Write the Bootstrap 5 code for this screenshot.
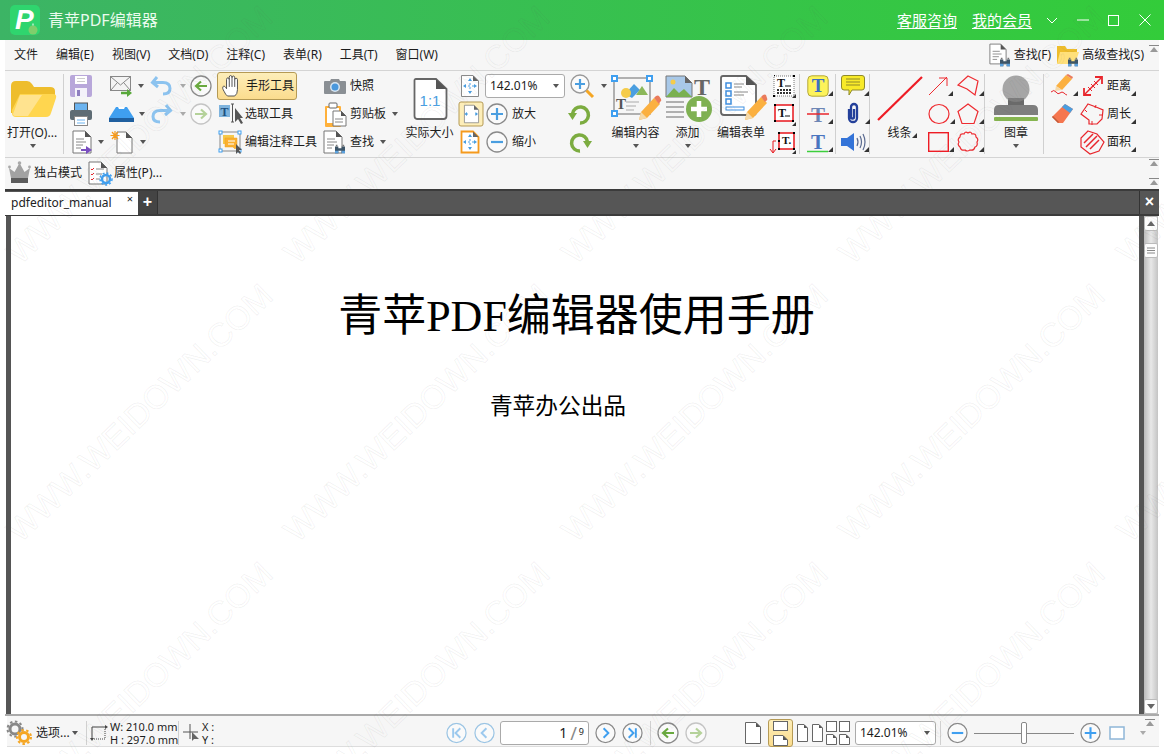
<!DOCTYPE html>
<html lang="zh-CN">
<head>
<meta charset="UTF-8">
<meta name="viewport" content="width=device-width, initial-scale=1.0">
<title>青苹PDF编辑器</title>
<link href="https://cdn.jsdelivr.net/npm/bootstrap@5.3.3/dist/css/bootstrap.min.css" rel="stylesheet">
<style>
html, body { height: 754px; overflow: hidden; }
body { position: relative; background: #fff; color: #1c1c1c; font: 12px/16px "Noto Sans", "Noto Sans CJK SC", sans-serif; }
svg { display: block; flex: none; overflow: visible; }
.titlebar { height: 40px; background: linear-gradient(90deg, #3cb465, #33cc3a); color: #fff; padding-left: 10px; }
.app-name { margin-left: 8px; font-size: 16px; color: #eafbee; }
.top-link { color: #fff; font-size: 15px; text-decoration: underline; text-underline-offset: 2px; }
.win-btn { width: 31px; height: 40px; }
.win { margin-left: 5px; width: 1154px; }
.menubar { height: 31px; background: #f6f6f6; border-bottom: 1px solid #d4d4d4; padding-left: 9px; }
.menubar > span.mi { margin-right: 18px; }
.fold { width: 10px; height: 8px; flex: none; border-top: 1px solid #888; position: relative; }
.fold::after { content: ""; position: absolute; left: 1px; top: 1px; border: 4px solid transparent; border-top: 0; border-bottom: 5px solid #999; }
.ribbon { height: 87px; background: #f6f6f6; border-bottom: 1px solid #d4d4d4; padding-top: 1px; display: grid;
  grid-template-columns: 58px 3px 41px 41px 40px 27px 107px 81px 55px 25px 83px 42px 55px 52px 55px 29px 5px 31px 4px 30px 4px 53px 29px 29px 5px 54px 5px 32px 70px 1fr;
  grid-template-rows: 28px 28px 28px; }
.cell { display: flex; align-items: center; white-space: nowrap; min-width: 0; }
.tall { grid-row: span 3; }
.big { display: flex; flex-direction: column; align-items: center; white-space: nowrap; }
.big-ico { height: 53px; display: flex; align-items: center; justify-content: center; }
.big .car { margin-top: 3px; }
.vsep { border-left: 1px solid #d0d0d0; margin: 2px 0; }
.car { display: inline-block; flex: none; border: 3.5px solid transparent; border-bottom: 0; border-top: 4px solid #555; }
.tri { flex: none; width: 0; height: 0; border-left: 5px solid transparent; border-bottom: 5px solid #333; align-self: flex-end; margin-bottom: 4px; }
.hand-on { height: 28px; width: 80px; margin-left: 2px; border: 1px solid #b59a55; border-radius: 3px; background: linear-gradient(#fdeeb9, #fbdc8e); padding-left: 4px; }
.combo { height: 24px; background: #fff; border: 1px solid #aaa; border-radius: 3px; padding: 0 5px 0 4px; display: flex; align-items: center; justify-content: space-between; }
.page-on { width: 25px; height: 28px; border: 1px solid #b59a55; border-radius: 3px; background: linear-gradient(#fdeeb9, #fbdc8e); }
.row3 { height: 31px; background: #f6f6f6; padding: 0 0 2px 3px; }
.tabs { height: 27px; background: #565656; border-top: 2px solid #3b3b3b; border-bottom: 2px solid #3b3b3b; color: #fff; }
.doc-tab { width: 133px; height: 23px; background: #fff; color: #222; padding: 3px 5px 0 6px; margin-top: 1px; }
.tab-x { font-size: 11px; line-height: 10px; margin-top: -1px; }
.tab-plus { width: 20px; font: 700 16px/22px "Liberation Sans", sans-serif; text-align: center; background: #444; border-right: 1px solid #333; }
.tab-close { width: 20px; font: 700 16px/22px "Liberation Sans", sans-serif; text-align: center; border-left: 1px solid #333; margin-left: auto; }
.doc { height: 500px; border-bottom: 2px solid #aaa; }
.strip-l { width: 5px; margin-left: 1px; background: #555; }
.strip-r { width: 5px; background: #555; }
.sheet { background: #fff; padding-top: 73px; }
.doc-title { font: 44px/56px "Liberation Serif", "Noto Sans CJK SC", serif; color: #000; padding-left: 3px; }
.doc-sub { font-size: 22.7px; line-height: 32px; color: #000; margin-top: 45px; margin-right: 34px; }
.vscroll { width: 14px; margin-right: 1px; background: linear-gradient(90deg, #bbb, #e8e8e8 50%, #c4c4c4); }
.sb-btn { height: 15px; background: #fdfdfd; border: 1px solid #bbb; border-radius: 2px; }
.sb-thumb { height: 15px; margin-top: 12px; background: #fdfdfd; border: 1px solid #bbb; border-radius: 2px; }
.statusbar { margin-left: 2px; height: 31px; padding-top: 3px; background: #f6f6f6; border-bottom: 1px solid #ddd; display: grid;
  grid-template-columns: 27px 38px 14px 4px 20px 68px 5px 19px 244px 28px 26px 95px 27px 28px 7px 28px 60px 23px 29px 29px 29px 85px 7px 27px 106px 29px 31px 12px 1fr; }
.wh { font-size: 11px; line-height: 13px; white-space: nowrap; }
.page-box { width: 89px; height: 24px; background: #fff; border: 1px solid #aaa; border-radius: 3px; justify-content: flex-end; padding-right: 4px; font-size: 14px; }
.page-box small { font-size: 9px; align-self: flex-start; margin-top: 2px; }
.page-slash { font-size: 18px; color: #888; margin: 0 2px 0 3px; }
.track { height: 1px; width: 47px; background: #888; }
.knob { width: 6px; height: 22px; border: 1px solid #888; border-radius: 2px; background: #fff; }
.wm-clip { position: absolute; inset: 0; overflow: hidden; pointer-events: none; z-index: 5; }
.wm-layer { margin: -4px 0 0 1px; width: 1388px; display: grid; grid-template-columns: repeat(5, 277.5px); grid-auto-rows: 278px; }
.wm-layer span { align-self: center; justify-self: center; font: 33px/40px "Liberation Sans", sans-serif; white-space: nowrap; color: transparent; -webkit-text-stroke: 1px rgba(90, 90, 90, .07); transform: rotate(-44deg); }
</style>
</head>
<body>
<svg width="0" height="0" class="position-absolute">
  <defs>
    <symbol id="pg" viewBox="0 0 20 24"><path d="M1 1H13L19 7V23H1z" fill="#fff" stroke="#777"/><path d="M13 1V7H19z" fill="#555"/></symbol>
    <symbol id="lines" viewBox="0 0 20 24"><path d="M4 9H12M4 12H14M4 15H11M4 18H9" stroke="#888"/></symbol>
    <symbol id="binoc" viewBox="0 0 14 12"><path d="M1 3h4v8H1zM9 3h4v8H9zM5 5h4v3H5z" fill="#3d5568"/><path d="M2 1h2v2H2zM10 1h2v2h-2z" fill="#777"/><path d="M1 8h4v3H1zM9 8h4v3H9z" fill="#5aa0dc"/></symbol>
    <symbol id="circ" viewBox="0 0 22 22"><circle cx="11" cy="11" r="10" fill="#fafafa" stroke="#8a8a8a" stroke-width="1.300"/></symbol>
    <symbol id="circ-b" viewBox="0 0 22 22"><circle cx="11" cy="11" r="10" fill="#fafafa" stroke="#9cc5e4" stroke-width="1.300"/></symbol>
    <symbol id="pgfit" viewBox="0 0 20 24"><path d="M1.500 1.500H13L18.500 7V22.500H1.500z" fill="#fff" stroke="#8a8a8a"/><path d="M13 1.500V7H18.500z" fill="#666"/></symbol>
  </defs>
</svg>

<div class="titlebar d-flex align-items-center">
  <svg width="30" height="30" viewBox="0 0 30 30"><rect width="30" height="30" rx="5" fill="#2fd56e"/><text x="5" y="24" font-family="Liberation Sans" font-size="28" font-weight="700" font-style="italic" fill="#fff">P</text><circle cx="23" cy="25" r="4.500" fill="#7fce6c"/><path d="M23 20.500v-2" stroke="#fff"/></svg>
  <span class="app-name">青苹PDF编辑器</span>
  <a class="top-link ms-auto" href="#">客服咨询</a>
  <a class="top-link" href="#" style="margin-left:15px">我的会员</a>
  <div class="win-btn d-flex align-items-center justify-content-center" style="margin-left:4px"><svg width="12" height="7" viewBox="0 0 12 7"><path d="M1 1l5 5 5-5" fill="none" stroke="#fff"/></svg></div>
  <div class="win-btn d-flex align-items-center justify-content-center"><svg width="12" height="2" viewBox="0 0 12 2"><path d="M0 1h12" stroke="#fff"/></svg></div>
  <div class="win-btn d-flex align-items-center justify-content-center"><svg width="11" height="11" viewBox="0 0 11 11"><rect x=".5" y=".5" width="10" height="10" fill="none" stroke="#fff"/></svg></div>
  <div class="win-btn d-flex align-items-center justify-content-center"><svg width="12" height="12" viewBox="0 0 12 12"><path d="M.5.500l11 11M11.500.500l-11 11" stroke="#fff"/></svg></div>
  <div style="width:4px"></div>
</div>

<div class="win">
  <div class="menubar d-flex align-items-center">
    <span class="mi">文件</span><span class="mi">编辑(E)</span><span class="mi">视图(V)</span><span class="mi">文档(D)</span><span class="mi">注释(C)</span><span class="mi">表单(R)</span><span class="mi">工具(T)</span><span class="mi">窗口(W)</span>
    <svg class="ms-auto" width="22" height="24" viewBox="0 0 22 24"><use href="#pg" width="18" height="22"/><use href="#lines" width="18" height="22"/><use href="#binoc" x="10" y="14" width="12" height="10"/></svg>
    <span style="margin-left:3px">查找(F)</span>
    <svg style="margin-left:6px" width="22" height="24" viewBox="0 0 22 24"><path d="M0 3h8l2 3h10v14H0z" fill="#eebd2c"/><path d="M3 9h19l-4 12H0z" fill="#ffe07a"/><use href="#binoc" x="10" y="14" width="12" height="10"/></svg>
    <span style="margin-left:3px">高级查找(S)</span>
    <div class="fold" style="margin:0 0 12px 5px"></div>
  </div>

  <div class="ribbon">
    <!-- row 1 -->
    <div class="tall big">
      <div class="big-ico"><svg width="46" height="38" viewBox="0 0 46 38"><path d="M0 6q0-5 5-5h11q3 0 5 3l2 3h16q5 0 5 4v8H0zM0 12h9v21H0z" fill="#eebd2c"/><path d="M9 14H42q4 0 3 4L40 33q-1 4-5 4H5q-4 0-4-4V30z" fill="#ffd64f"/><path d="M9 15H31L17 36H4q-2 0-2-2z" fill="#ffe38f"/></svg></div>
      <span style="margin-right:4px">打开(O)...</span><i class="car" style="margin-right:2px"></i>
    </div>
    <div class="tall vsep"></div>
    <div class="cell ps-1"><svg width="22" height="22" viewBox="0 0 22 22"><rect width="22" height="22" rx="2" fill="#b8a7da"/><rect x="5" y="1" width="12" height="8" fill="#fff"/><path d="M7 3.500h8M7 6.500h8" stroke="#ccc"/><rect x="5" y="13" width="12" height="9" fill="#f4f2fa"/><rect x="7" y="15" width="3" height="6" fill="#8f7fc0"/></svg></div>
    <div class="cell" style="padding-left:3px"><svg width="23" height="22" viewBox="0 0 23 22"><rect x=".5" y="1.500" width="20" height="14" fill="#f4f4f4" stroke="#888"/><path d="M1 2l9.500 8L20 2M1 15l6-7M20 15l-6-7" fill="none" stroke="#888"/><path d="M11 18h8" stroke="#58a83a" stroke-width="2.500"/><path d="M17 14l5 4-5 4z" fill="#58a83a"/></svg><i class="car" style="margin-left:5px"></i></div>
    <div class="cell" style="padding-left:3px"><svg width="21" height="20" viewBox="0 0 21 20"><path d="M6 1L1.500 6.500 7 11" fill="none" stroke="#8cc3ef" stroke-width="3"/><path d="M3 6.500h9q7 0 7 6 0 5.500-7 5.500" fill="none" stroke="#8cc3ef" stroke-width="3"/></svg><i class="car" style="margin-left:8px;border-top-color:#aaa"></i></div>
    <div class="cell" style="padding-left:2px"><svg width="22" height="22" viewBox="0 0 22 22"><use href="#circ" width="22" height="22"/><path d="M17 11H7M11 6.500L6 11l5 4.500" fill="none" stroke="#69a93f" stroke-width="2.200"/></svg></div>
    <div class="cell"><div class="hand-on cell">
      <svg width="20" height="24" viewBox="0 0 22 24"><path d="M4 21C2 17 0 15 1 13s3 0 4 2V5q0-2 1.500-2T8 5V2.500q0-2 1.500-2t1.500 2V3q0-2 1.500-2T14 3v2q0-1.500 1.500-1.500T17 5v11q0 5-3 7H6z" fill="#fff" stroke="#444"/><path d="M8 5v8M11 3v10M14 5v8" stroke="#444" fill="none"/></svg>
      <span style="margin-left:4px">手形工具</span></div></div>
    <div class="cell" style="padding-left:2px"><svg width="22" height="16" viewBox="0 0 22 16"><path d="M1 3h5l1-2h8l1 2h5q1 0 1 1v11q0 1-1 1H1q-1 0-1-1V4q0-1 1-1z" fill="#8a8f94"/><circle cx="11" cy="9" r="5" fill="#d8e6f2"/><circle cx="11" cy="9" r="3.500" fill="#4a98dc"/></svg><span style="margin-left:4px">快照</span></div>
    <div class="tall big">
      <div class="big-ico"><svg width="35" height="42" viewBox="0 0 35 42"><path d="M1.500 2.500q0-1.500 1.500-1.500H23L33.500 11V38q0 3-3 3H4q-2.500 0-2.500-3z" fill="#fff" stroke="#666" stroke-width="1.800"/><path d="M23 1V11H33.500z" fill="#555"/><text x="17" y="28" text-anchor="middle" font-family="Liberation Sans" font-size="15" fill="#4a9ee0">1:1</text></svg></div>
      <span style="margin-right:2px">实际大小</span>
    </div>
    <div class="cell" style="padding-left:2px"><svg width="20" height="24" viewBox="0 0 20 24"><use href="#pgfit" width="20" height="24"/><path d="M10 5v14M4 12h12" stroke="#4a9ee0" stroke-dasharray="2 2"/><path d="M10 4l2 3H8zM10 20l2-3H8zM3 12l3-2v4zM17 12l-3-2v4z" fill="#4a9ee0"/></svg></div>
    <div class="cell" style="padding-left:2px"><div class="combo w-100" style="margin-right:1px"><span>142.01%</span><i class="car"></i></div></div>
    <div class="cell" style="padding-left:4px"><svg width="24" height="24" viewBox="0 0 24 24"><circle cx="10" cy="10" r="9" fill="#fbfbfb" stroke="#999" stroke-width="1.400"/><path d="M10 5v10M5 10h10" stroke="#4a9ee0" stroke-width="2.200"/><path d="M16.500 16.500L23 23" stroke="#f5a623" stroke-width="3"/></svg><i class="car" style="margin-left:7px"></i></div>
    <div class="tall big">
      <div class="big-ico"><svg width="50" height="48" viewBox="0 0 50 48"><rect x="3" y="3" width="36" height="36" fill="none" stroke="#999" stroke-width="1.500"/><path d="M14 19l9-10 6 6-8 8z" fill="#4a9ee0"/><path d="M25 20l6-9 6 9z" fill="#8cb85a"/><circle cx="15" cy="18" r="5" fill="#f5cc4a"/><text x="5" y="34" font-family="Liberation Serif" font-size="15" font-weight="700" fill="#555">T</text><path d="M15 27h13M15 31h10M15 35h8" stroke="#aaa"/><g fill="#fff" stroke="#3f9ff0" stroke-width="2"><rect x="1" y="1" width="5" height="5"/><rect x="36" y="1" width="5" height="5"/><rect x="1" y="36" width="5" height="5"/></g><path d="M28 45l2-8 13-14 6 6-13 14z" fill="#fbb040"/><path d="M43 23l2-2q2-1 3 0l2 3q1 2-1 3l-1 2z" fill="#ea7b5c"/><path d="M28 45l2-8 6 6z" fill="#f5d9a8"/></svg></div>
      <span>编辑内容</span><i class="car"></i>
    </div>
    <div class="tall big">
      <div class="big-ico"><svg width="48" height="47" viewBox="0 0 48 47"><path d="M1 1H20L27 8V22H1z" fill="#a8c8e8" stroke="#777"/><path d="M1 22l8-9 5 5 5-4 8 8H1z" fill="#7ab050"/><circle cx="8" cy="7" r="2.500" fill="#f5cc4a"/><path d="M20 1V8H27z" fill="#666"/><text x="29" y="20" font-family="Liberation Serif" font-size="24" font-weight="700" fill="#666">T</text><path d="M1 27h18M1 32h18M1 37h18M1 42h18" stroke="#999" stroke-width="1.500"/><circle cx="34" cy="34" r="13" fill="#7fb152"/><path d="M34 26v16M26 34h16" stroke="#fff" stroke-width="4.500"/></svg></div>
      <span style="margin-right:3px">添加</span><i class="car" style="margin-right:3px"></i>
    </div>
    <div class="tall big">
      <div class="big-ico"><svg width="48" height="47" viewBox="0 0 48 47"><path d="M2 3q0-2 2-2H27L37 10V37q0 3-3 3H5q-3 0-3-3z" fill="#fff" stroke="#666" stroke-width="1.800"/><path d="M27 1V10H37z" fill="#555"/><path d="M7 8h5v5H7zM7 16h5v5H7zM7 24h5v5H7z" fill="none" stroke="#3f8fe0" stroke-width="1.500"/><path d="M15 9h10M15 12h8M15 17h14M15 20h10" stroke="#888"/><rect x="7" y="32" width="18" height="3" fill="none" stroke="#3f8fe0"/><path d="M26 45l2-8 14-15 6 6-14 15z" fill="#fbb040"/><path d="M42 22l2-2q2-1 3 0l1 3q1 2-1 3l-1 1z" fill="#ea7b5c"/><path d="M26 45l2-8 6 6z" fill="#f5d9a8"/></svg></div>
      <span style="margin-right:3px">编辑表单</span>
    </div>
    <div class="cell" style="padding-left:2px"><svg width="24" height="24" viewBox="0 0 24 24"><rect x="2" y="2" width="20" height="20" fill="#fff" stroke="#777" stroke-dasharray="1 1"/><path d="M2 1h1v1H2zM21 1h2v2h-2zM1 21h2v2H1z" fill="#000"/><text x="5" y="13" font-family="Liberation Serif" font-size="12" font-weight="700" fill="#111">T</text><path d="M13 12h6" stroke="#111"/><path d="M5 16h14M5 19h14" stroke="#333" stroke-width="2" stroke-dasharray="2 1"/><path d="M24 24v-4l-4 4z" fill="#333"/></svg></div>
    <div class="tall vsep"></div>
    <div class="cell" style="padding-left:3px"><svg width="22" height="22" viewBox="0 0 22 22"><rect x=".8" y=".8" width="20.400" height="20.400" rx="4" fill="#fdf35a" stroke="#b5a83a"/><text x="11" y="17" text-anchor="middle" font-family="Liberation Serif" font-size="19" font-weight="700" fill="#3d6fc0">T</text></svg><i class="tri" style="margin-left:-1px"></i></div>
    <div class="tall vsep"></div>
    <div class="cell" style="padding-left:2px"><svg width="24" height="22" viewBox="0 0 24 22"><path d="M3 .500H21q2.500 0 2.500 2.500V12q0 3-2.500 3H11l-3 5V15H3Q.500 15 .500 12V3Q.500.500 3 .500z" fill="#f8ea28" stroke="#8f8a2a"/><path d="M5 4h14M5 7h14M5 10h14" stroke="#8f8a2a"/></svg><i class="tri" style="margin-left:-1px"></i></div>
    <div class="tall vsep"></div>
    <div class="tall big">
      <div class="big-ico"><svg width="46" height="46" viewBox="0 0 46 46"><path d="M1 44L45 1" stroke="#ee1c25" stroke-width="2.200"/></svg></div>
      <div class="d-flex" style="margin-left:5px"><span>线条</span><i class="tri" style="margin:0 0 3px 0"></i></div>
    </div>
    <div class="cell" style="padding-left:2px"><svg width="20" height="20" viewBox="0 0 20 20"><path d="M1 19L19 1M11 2h8v8" fill="none" stroke="#ee2b30"/></svg><i class="tri"></i></div>
    <div class="cell" style="padding-left:2px"><svg width="22" height="22" viewBox="0 0 22 22"><path d="M11 1l10 5-3 14L10 14 1 10z" fill="none" stroke="#ee2b30" stroke-width="1.200"/></svg><i class="tri"></i></div>
    <div class="tall vsep"></div>
    <div class="tall big">
      <div class="big-ico"><svg width="46" height="46" viewBox="0 0 46 46"><circle cx="23" cy="13" r="13.500" fill="#a6a6a6"/><path d="M15 22h16v7h9q5 0 5 5v5H1v-5q0-5 5-5h9z" fill="#7e7e7e"/><path d="M15 24q8 4 16 0v5H15z" fill="#6a6a6a"/><rect x="1" y="41" width="44" height="4" rx="1" fill="#86b550"/></svg></div>
      <span>图章</span><i class="car"></i>
    </div>
    <div class="tall vsep"></div>
    <div class="cell" style="padding-left:2px"><svg width="24" height="24" viewBox="0 0 24 24"><path d="M6 12L16 1l6 4-10 11z" fill="#fbb040"/><path d="M16 1l2-1 5 3-1 2z" fill="#ea7b5c"/><path d="M6 12l-1 5 7-1z" fill="#f5d9a8"/><path d="M1 18q3-3 5 0t4 1 4 0 3 2" fill="none" stroke="#e8262c"/></svg><i class="tri" style="margin-left:-1px"></i></div>
    <div class="cell" style="padding-left:3px"><svg width="20" height="20" viewBox="0 0 20 20"><path d="M2 18L18 2" stroke="#e8262c" stroke-width="1.400"/><path d="M1 12v7h7M12 1h7v7" fill="none" stroke="#e8262c" stroke-width="1.800"/><path d="M5 11l4 4M8 8l4 4M11 5l4 4" stroke="#e8262c"/></svg><span style="margin-left:4px">距离</span><i class="tri"></i></div>
    <div class="tall"><div class="fold" style="margin:3px 0 0 20px"></div></div>

    <!-- row 2 -->
    <div class="cell ps-1"><svg width="22" height="24" viewBox="0 0 22 24"><rect x="4.500" y="1" width="13" height="8" fill="#6cb4f0" stroke="#555"/><rect y="8" width="22" height="10" rx="2" fill="#5e6c74"/><rect x="4.500" y="14.500" width="13" height="9" fill="#fff" stroke="#888"/><path d="M7 18h8M7 21h8" stroke="#6cb4f0"/></svg></div>
    <div class="cell" style="padding-left:2px"><svg width="25" height="17" viewBox="0 0 25 17"><path d="M7 1H18L25 12H0z" fill="#3f9ff0"/><path d="M9 1h7l-1 2H10z" fill="#fff"/><rect y="12" width="25" height="4" fill="#1f5f9f"/></svg><i class="car" style="margin-left:5px"></i></div>
    <div class="cell" style="padding-left:3px"><svg width="21" height="20" viewBox="0 0 21 20"><path d="M15 1l4.500 5.500L14 11" fill="none" stroke="#8cc3ef" stroke-width="3"/><path d="M18 6.500H9q-7 0-7 6 0 5.500 7 5.500" fill="none" stroke="#8cc3ef" stroke-width="3"/></svg><i class="car" style="margin-left:8px;border-top-color:#aaa"></i></div>
    <div class="cell" style="padding-left:2px"><svg width="22" height="22" viewBox="0 0 22 22"><circle cx="11" cy="11" r="10" fill="#fafafa" stroke="#c4c4c4" stroke-width="1.300"/><path d="M5 11h10M11 6.500l5 4.500-5 4.500" fill="none" stroke="#b5d29a" stroke-width="2.200"/></svg></div>
    <div class="cell" style="padding-left:4px"><svg width="24" height="22" viewBox="0 0 24 22"><rect x="0" y="2" width="11" height="12" fill="#7eb3dd"/><text x="5.500" y="12.500" text-anchor="middle" font-family="Liberation Serif" font-size="12" font-weight="700" fill="#1d4f80">T</text><path d="M12 1h3M13.500 1v18M12 19h3" stroke="#555"/><path d="M16 5v14l3-3 3 5 2-1-3-5h3z" fill="#555"/></svg><span style="margin-left:2px">选取工具</span></div>
    <div class="cell" style="padding-left:3px"><svg width="22" height="25" viewBox="0 0 22 25"><rect x="0" y="4" width="16" height="21" rx="1" fill="#ffb13b"/><rect x="2" y="6" width="12" height="15" fill="#fff"/><rect x="4" y="1" width="8" height="5" rx="1" fill="#fff" stroke="#666"/><path d="M8 9h8l5 5v10H8z" fill="#fff" stroke="#777"/><path d="M16 9v5h5z" fill="#555"/><path d="M10 17h8M10 20h8" stroke="#888"/></svg><span style="margin-left:3px">剪贴板</span><i class="car" style="margin-left:6px"></i></div>
    <div class="cell" style="padding-left:1px"><svg width="24" height="24" viewBox="0 0 24 24"><rect x="0" y="0" width="24" height="24" rx="2" fill="#fdeeb9" stroke="#b59a55"/><use href="#pgfit" x="4" y="2" width="17" height="20"/><path d="M7 12h2M16 12h2" stroke="#4a9ee0"/><path d="M5.500 12l2.500-2v4zM19 12l-2.500-2v4z" fill="#4a9ee0"/></svg></div>
    <div class="cell" style="padding-left:3px"><svg width="22" height="22" viewBox="0 0 22 22"><use href="#circ" width="22" height="22"/><path d="M11 5v12M5 11h12" stroke="#4a9ee0" stroke-width="2.200"/></svg><span style="margin-left:4px">放大</span></div>
    <div class="cell" style="padding-left:2px"><svg width="24" height="22" viewBox="0 0 24 22"><path d="M4.500 11A8 8 0 1 1 12 20" fill="none" stroke="#7cac40" stroke-width="3.500"/><path d="M0 10h9l-4.500 7z" fill="#7cac40"/></svg></div>
    <div class="cell" style="padding-left:2px"><svg width="24" height="24" viewBox="0 0 24 24"><rect x="3" y="3" width="18" height="16" fill="#fff" stroke="#e8161c" stroke-width="1.500"/><path d="M2 2h2v2H2zM20 2h2v2h-2zM2 18h2v2H2zM20 18h2v2h-2z" fill="#000"/><text x="6" y="15" font-family="Liberation Serif" font-size="12" font-weight="700" fill="#111">T</text><path d="M13 14h5" stroke="#111"/><path d="M24 24v-4l-4 4z" fill="#333"/></svg></div>
    <div class="cell" style="padding-left:3px"><svg width="22" height="22" viewBox="0 0 22 22"><text x="11" y="19" text-anchor="middle" font-family="Liberation Serif" font-size="21" font-weight="700" fill="#6d86b5">T</text><path d="M0 11h22" stroke="#e8262c" stroke-width="1.500"/></svg><i class="tri" style="margin-left:-1px"></i></div>
    <div class="cell" style="padding-left:6px"><svg width="16" height="24" viewBox="0 0 16 24"><path d="M4 7V16a4 4 0 0 0 8 0V5a3 3 0 0 0-6 0v10a1.500 1.500 0 0 0 3 0V7" fill="none" stroke="#24409a" stroke-width="2.300"/></svg><i class="tri" style="margin-left:4px"></i></div>
    <div class="cell" style="padding-left:2px"><svg width="22" height="22" viewBox="0 0 22 22"><ellipse cx="11" cy="11" rx="10" ry="9.500" fill="none" stroke="#ee2b30" stroke-width="1.200"/></svg><i class="tri"></i></div>
    <div class="cell" style="padding-left:2px"><svg width="22" height="22" viewBox="0 0 22 22"><path d="M11 1l10 7.500-4 12H5l-4-12z" fill="none" stroke="#ee2b30" stroke-width="1.200"/></svg><i class="tri"></i></div>
    <div class="cell" style="padding-left:3px"><svg width="24" height="22" viewBox="0 0 24 22"><path d="M7 20L1 14 14 1l8 5-10 14z" fill="#f5764f"/><path d="M11 4l3-3 8 5-3 4z" fill="#4a9ee0"/><path d="M1 14l6 6 1-1-6-6z" fill="#c05a3a"/></svg></div>
    <div class="cell"><svg width="24" height="24" viewBox="0 0 24 24"><path d="M8 2l8 3 7 3-1 9-5 5H9v-4l-8-6z" fill="none" stroke="#e8262c" stroke-width="1.200"/><path d="M5 8l2 2M16 3l-1 3M22 13l-3 0M12 19v4" stroke="#e8262c"/></svg><span style="margin-left:3px">周长</span><i class="tri"></i></div>

    <!-- row 3 -->
    <div class="cell" style="padding-left:6px"><svg width="20" height="24" viewBox="0 0 20 24"><use href="#pg" width="20" height="24"/><use href="#lines" width="20" height="24"/><path d="M9 20h7" stroke="#7a4fc0" stroke-width="2"/><path d="M14 16l6 4-6 4z" fill="#7a4fc0"/></svg><i class="car" style="margin-left:6px"></i></div>
    <div class="cell" style="padding-left:3px"><svg width="24" height="24" viewBox="0 0 24 24"><path d="M7 2H16L22 8V23H7z" fill="#fff" stroke="#777"/><path d="M16 2V8H22z" fill="#555"/><path d="M5 1v9M.500 5.500h9M2 2l6 7M8 2L2 9" stroke="#f59a1c" stroke-width="1.200"/></svg><i class="car" style="margin-left:6px"></i></div>
    <div></div>
    <div></div>
    <div class="cell" style="padding-left:4px"><svg width="25" height="24" viewBox="0 0 25 24"><rect x="1" y="2" width="20" height="19" fill="none" stroke="#888"/><path d="M4 5h11v9H4z" fill="#f6c84a"/><path d="M6 8h12v9l-2 2-2-2H6z" fill="#fbb030" stroke="#e8a020" stroke-width=".5"/><path d="M9 11h7M9 14h6" stroke="#fff"/><g fill="#fff" stroke="#3f9ff0"><rect x="0" y="1" width="3" height="3"/><rect x="19" y="1" width="3" height="3"/><rect x="0" y="19" width="3" height="3"/><rect x="19" y="19" width="3" height="3"/></g><path d="M17 14v10l2-2 2 2 1-1-2-3h3z" fill="#555"/></svg><span style="margin-left:1px">编辑注释工具</span></div>
    <div class="cell" style="padding-left:1px"><svg width="24" height="24" viewBox="0 0 24 24"><use href="#pg" width="20" height="24"/><use href="#lines" width="20" height="24"/><use href="#binoc" x="11" y="14" width="12" height="10"/></svg><span style="margin-left:3px">查找</span><i class="car" style="margin-left:6px"></i></div>
    <div class="cell" style="padding-left:2px"><svg width="20" height="24" viewBox="0 0 20 24"><path d="M1.500 1.500H13L18.500 7V22.500H1.500z" fill="#fff" stroke="#f59a1c" stroke-width="1.800"/><path d="M13 1.500V7H18.500z" fill="#666"/><path d="M10 5v14M4 12h12" stroke="#4a9ee0" stroke-dasharray="2 2"/><path d="M10 4l2 3H8zM10 20l2-3H8zM3 12l3-2v4zM17 12l-3-2v4z" fill="#4a9ee0"/></svg></div>
    <div class="cell" style="padding-left:3px"><svg width="22" height="22" viewBox="0 0 22 22"><use href="#circ" width="22" height="22"/><path d="M5 11h12" stroke="#4a9ee0" stroke-width="2.200"/></svg><span style="margin-left:4px">缩小</span></div>
    <div class="cell" style="padding-left:2px"><svg width="24" height="22" viewBox="0 0 24 22"><path d="M19.500 11A8 8 0 1 0 12 20" fill="none" stroke="#7cac40" stroke-width="3.500"/><path d="M24 10h-9l4.500 7z" fill="#7cac40"/></svg></div>
    <div class="cell"><svg width="26" height="24" viewBox="0 0 26 24"><rect x="9" y="3" width="15" height="16" fill="#fff" stroke="#e8161c" stroke-width="1.500"/><path d="M8 2h2v2H8zM23 2h2v2h-2zM8 18h2v2H8zM23 18h2v2h-2zM8 10h2v2H8z" fill="#000"/><text x="12" y="14" font-family="Liberation Serif" font-size="11" font-weight="700" fill="#111">T.</text><path d="M6 11H3v11M0 19l3 4 3-4" fill="none" stroke="#e8161c"/><path d="M26 24v-4l-4 4z" fill="#333"/></svg></div>
    <div class="cell" style="padding-left:3px"><svg width="22" height="22" viewBox="0 0 22 22"><text x="11" y="18" text-anchor="middle" font-family="Liberation Serif" font-size="21" font-weight="700" fill="#4a75c0">T</text><path d="M0 20.500h21" stroke="#3ccf3c" stroke-width="1.500"/></svg><i class="tri" style="margin-left:-1px"></i></div>
    <div class="cell" style="padding-left:2px"><svg width="24" height="20" viewBox="0 0 24 20"><path d="M0 6h6l7-5v18l-7-5H0z" fill="#3474d8"/><path d="M16 6q2 4 0 8M19 4q3 6 0 12M22 2q4 8 0 16" fill="none" stroke="#5a6a90" stroke-width="1.200"/></svg><i class="tri" style="margin-left:-1px"></i></div>
    <div class="cell" style="padding-left:2px"><svg width="21" height="20" viewBox="0 0 21 20"><rect x=".7" y=".7" width="19.600" height="18.600" fill="none" stroke="#ee1c25" stroke-width="1.400"/></svg><i class="tri"></i></div>
    <div class="cell" style="padding-left:2px"><svg width="22" height="22" viewBox="0 0 22 22"><path d="M11 2q3-2 4 1 4-1 4 3 3 2 1 5 1 4-2 5-1 4-5 3-3 2-5 0-4 1-5-3-3-2-1-5-2-3 1-5 0-4 4-3 1-3 4-1z" fill="none" stroke="#ee2b30" stroke-width="1.200"/></svg><i class="tri"></i></div>
    <div></div>
    <div class="cell"><svg width="24" height="24" viewBox="0 0 24 24"><path d="M8 1l9 3 7 8-5 9-9 3-9-7V8z" fill="none" stroke="#e8262c" stroke-width="1.200"/><path d="M4 13L13 4M6 17L17 6M10 19l9-9" stroke="#e8262c" stroke-width="1.500"/></svg><span style="margin-left:3px">面积</span><i class="tri"></i></div>
  </div>

  <div class="row3 d-flex align-items-center">
    <svg width="23" height="23" viewBox="0 0 23 23"><path d="M1 7l5.500 4L11.500 2l5 9L22 7l-2 10H3z" fill="#a2a2a2"/><circle cx="11.500" cy="2" r="1.800" fill="#aaa"/><circle cx="1.500" cy="6" r="1.400" fill="#aaa"/><circle cx="21.500" cy="6" r="1.400" fill="#aaa"/><path d="M3 17h17v5H3z" fill="#5c5c5c"/></svg>
    <span style="margin-left:3px">独占模式</span>
    <svg style="margin-left:6px" width="24" height="24" viewBox="0 0 24 24"><use href="#pg" width="20" height="24"/><path d="M3 8l1 1 2-2M3 13l1 1 2-2M3 18l1 1 2-2" fill="none" stroke="#e8262c"/><path d="M8 8h8M8 13h6M8 18h4" stroke="#888"/><circle cx="18" cy="18" r="4" fill="none" stroke="#3f9ff0" stroke-width="2.500"/><circle cx="18" cy="18" r="6" fill="none" stroke="#3f9ff0" stroke-width="1.500" stroke-dasharray="2 2"/></svg>
    <span style="margin-left:2px">属性(P)...</span>
    <div class="ms-auto d-flex flex-column justify-content-between" style="height:27px"><div class="fold"></div><div class="fold"></div></div>
  </div>

  <div class="tabs d-flex">
    <div class="doc-tab d-flex justify-content-between"><span>pdfeditor_manual</span><span class="tab-x">×</span></div>
    <div class="tab-plus">+</div>
    <div class="tab-close">×</div>
  </div>

  <div class="doc d-flex">
    <div class="strip-l"></div>
    <div class="sheet flex-grow-1 d-flex flex-column align-items-center">
      <div class="doc-title">青苹PDF编辑器使用手册</div>
      <div class="doc-sub">青苹办公出品</div>
    </div>
    <div class="strip-r"></div>
    <div class="vscroll d-flex flex-column">
      <div class="sb-btn d-flex align-items-center justify-content-center"><svg width="8" height="5" viewBox="0 0 8 5"><path d="M4 0l4 5H0z" fill="#666"/></svg></div>
      <div class="sb-thumb d-flex align-items-center justify-content-center"><svg width="8" height="7" viewBox="0 0 8 7"><path d="M0 1h8M0 3.500h8M0 6h8" stroke="#888"/></svg></div>
      <div class="sb-btn mt-auto d-flex align-items-center justify-content-center"><svg width="8" height="5" viewBox="0 0 8 5"><path d="M4 5L8 0H0z" fill="#666"/></svg></div>
    </div>
  </div>

  <div class="statusbar">
    <div class="cell"><svg width="26" height="24" viewBox="0 0 26 24"><circle cx="8" cy="8" r="5" fill="none" stroke="#888" stroke-width="3"/><circle cx="8" cy="8" r="7.500" fill="none" stroke="#888" stroke-width="2" stroke-dasharray="2.500 2.500"/><circle cx="17" cy="16" r="4.500" fill="none" stroke="#f5a623" stroke-width="3"/><circle cx="17" cy="16" r="7" fill="none" stroke="#f5a623" stroke-width="2" stroke-dasharray="2.500 2.500"/></svg></div>
    <div class="cell" style="padding-left:2px">选项...</div>
    <div class="cell"><i class="car"></i></div>
    <div class="vsep" style="margin:2px 0"></div>
    <div class="cell"><svg width="18" height="18" viewBox="0 0 18 18"><path d="M2 15V3H15" fill="none" stroke="#444"/><path d="M15 1l3 2-3 2zM0 14l2 3 2-3z" fill="#444"/><path d="M4 15h11V5" fill="none" stroke="#444" stroke-dasharray="1 1"/></svg></div>
    <div class="cell wh"><div>W: 210.0 mm<br>H : 297.0 mm</div></div>
    <div class="vsep" style="margin:2px 0"></div>
    <div class="cell"><svg width="18" height="20" viewBox="0 0 18 20"><path d="M7 1v15M0 9h15" stroke="#555"/><path d="M9 9v9l2-2h5z" fill="#666"/></svg></div>
    <div class="cell wh"><div>X :<br>Y :</div></div>

    <div class="cell"><svg width="21" height="22" viewBox="0 0 22 22"><use href="#circ-b" width="22" height="22"/><path d="M7.500 6v10M15 6l-5 5 5 5" fill="none" stroke="#9cc9ee" stroke-width="2"/></svg></div>
    <div class="cell"><svg width="21" height="22" viewBox="0 0 22 22"><use href="#circ-b" width="22" height="22"/><path d="M13 6l-5 5 5 5" fill="none" stroke="#9cc9ee" stroke-width="2"/></svg></div>
    <div class="cell"><div class="page-box cell"><span>1</span><span class="page-slash">/</span><small>9</small></div></div>
    <div class="cell"><svg width="21" height="22" viewBox="0 0 22 22"><use href="#circ" width="22" height="22"/><path d="M9 6l5 5-5 5" fill="none" stroke="#3f9ff0" stroke-width="2"/></svg></div>
    <div class="cell"><svg width="21" height="22" viewBox="0 0 22 22"><use href="#circ" width="22" height="22"/><path d="M14.500 6v10M7 6l5 5-5 5" fill="none" stroke="#3f9ff0" stroke-width="2"/></svg></div>
    <div class="vsep" style="margin:2px 0"></div>
    <div class="cell"><svg width="22" height="22" viewBox="0 0 22 22"><use href="#circ" width="22" height="22"/><path d="M17 11H7M11 6.500L6 11l5 4.500" fill="none" stroke="#69a93f" stroke-width="2.200"/></svg></div>
    <div class="cell"><svg width="22" height="22" viewBox="0 0 22 22"><circle cx="11" cy="11" r="10" fill="#fafafa" stroke="#c4c4c4" stroke-width="1.300"/><path d="M5 11h10M11 6.500l5 4.500-5 4.500" fill="none" stroke="#b5d29a" stroke-width="2.200"/></svg></div>
    <div class="cell"><svg width="16" height="22" viewBox="0 0 16 22"><path d="M.5.500H11L15.500 5V21.500H.5z" fill="#fff" stroke="#666"/><path d="M11 .5V5H15.500z" fill="#555"/></svg></div>
    <div class="cell"><div class="page-on d-flex flex-column align-items-center justify-content-center gap-1"><svg width="15" height="10" viewBox="0 0 15 10"><rect x=".5" y=".5" width="14" height="9" fill="#fff" stroke="#666"/></svg><svg width="15" height="11" viewBox="0 0 15 11"><path d="M.5.500H10L14.500 5V10.500H.5z" fill="#fff" stroke="#666"/><path d="M10 .5V5H14.500z" fill="#555"/></svg></div></div>
    <div class="cell gap-1"><svg width="11" height="18" viewBox="0 0 11 18"><path d="M.5.500H7L10.500 4V17.500H.5z" fill="#fff" stroke="#666"/><path d="M7 .5V4H10.500z" fill="#555"/></svg><svg width="11" height="18" viewBox="0 0 11 18"><path d="M.5.500H7L10.500 4V17.500H.5z" fill="#fff" stroke="#666"/><path d="M7 .5V4H10.500z" fill="#555"/></svg></div>
    <div class="cell"><svg width="24" height="24" viewBox="0 0 24 24"><g fill="#fff" stroke="#666"><rect x=".5" y=".5" width="10" height="10"/><rect x="13.500" y=".5" width="10" height="10"/><path d="M.5 13.500H7L10.500 17V23.500H.5zM13.500 13.500H20L23.500 17V23.500H13.500z"/></g><path d="M7 13.500V17H10.500zM20 13.500V17H23.500z" fill="#555"/></svg></div>
    <div class="cell"><div class="combo w-100 me-1"><span>142.01%</span><i class="car"></i></div></div>
    <div class="vsep" style="margin:2px 0"></div>
    <div class="cell"><svg width="21" height="22" viewBox="0 0 22 22"><use href="#circ" width="22" height="22"/><path d="M5 11h12" stroke="#3f9ff0" stroke-width="2.200"/></svg></div>
    <div class="cell"><div class="track"></div><div class="knob"></div><div class="track"></div></div>
    <div class="cell"><svg width="21" height="22" viewBox="0 0 22 22"><use href="#circ" width="22" height="22"/><path d="M11 5v12M5 11h12" stroke="#3f9ff0" stroke-width="2.200"/></svg></div>
    <div class="cell"><svg width="16" height="14" viewBox="0 0 16 14"><rect x="1" y="1" width="14" height="12" fill="#fff" stroke="#8fb6d8" stroke-width="1.500"/></svg></div>
    <div class="cell"><i class="car" style="border-top-color:#aaa"></i></div>
    <div class="cell align-items-start justify-content-end pe-1"><div class="fold"></div></div>
  </div>
</div>

<div class="wm-clip">
  <div class="wm-layer">
    <span>WWW.WEIDOWN.COM</span><span>WWW.WEIDOWN.COM</span><span>WWW.WEIDOWN.COM</span><span>WWW.WEIDOWN.COM</span><span>WWW.WEIDOWN.COM</span>
    <span>WWW.WEIDOWN.COM</span><span>WWW.WEIDOWN.COM</span><span>WWW.WEIDOWN.COM</span><span>WWW.WEIDOWN.COM</span><span>WWW.WEIDOWN.COM</span>
    <span>WWW.WEIDOWN.COM</span><span>WWW.WEIDOWN.COM</span><span>WWW.WEIDOWN.COM</span><span>WWW.WEIDOWN.COM</span><span>WWW.WEIDOWN.COM</span>
  </div>
</div>

<script src="https://cdn.jsdelivr.net/npm/bootstrap@5.3.3/dist/js/bootstrap.bundle.min.js"></script>
</body>
</html>
